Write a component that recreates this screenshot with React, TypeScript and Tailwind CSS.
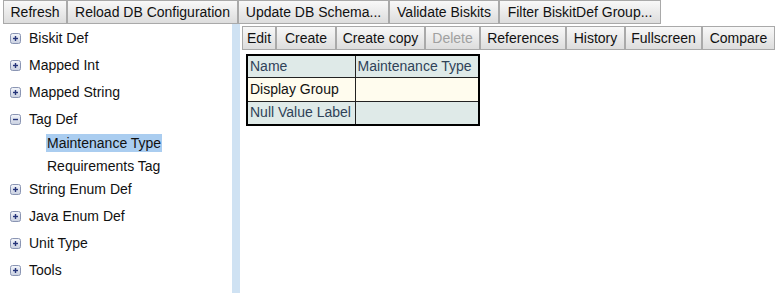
const topButtons = [
  { label: "Refresh", w: "w-[64px]" },
  { label: "Reload DB Configuration", w: "w-[171px]" },
  { label: "Update DB Schema...", w: "w-[151px]" },
  { label: "Validate Biskits", w: "w-[110px]" },
  { label: "Filter BiskitDef Group...", w: "w-[162px]" },
];

const editButtons = [
  { label: "Edit", w: "w-[34px]" },
  { label: "Create", w: "w-[60px]" },
  { label: "Create copy", w: "w-[89px]" },
  { label: "Delete", w: "w-[55px]", disabled: true },
  { label: "References", w: "w-[86px]" },
  { label: "History", w: "w-[59px]" },
  { label: "Fullscreen", w: "w-[77px]" },
  { label: "Compare", w: "w-[73px]" },
];

const treeBefore = ["Biskit Def", "Mapped Int", "Mapped String"];
const treeAfter = ["String Enum Def", "Java Enum Def", "Unit Type", "Tools"];

function ToolButton({ label, w, disabled }: { label: string; w: string; disabled?: boolean }) {
  return (
    <button
      className={`${w} h-[24px] shrink-0 border border-[#a9a9a9] bg-gradient-to-b from-[#f8f8f8] to-[#dddddd] px-0 text-center text-[14px] leading-none ${
        disabled ? "text-[#a0a0a0]" : "text-[#111]"
      }`}
    >
      {label}
    </button>
  );
}

function Expander({ open }: { open?: boolean }) {
  return (
    <svg width="11" height="11" viewBox="0 0 11 11" className="shrink-0">
      <defs>
        <linearGradient id="exg" x1="0" y1="0" x2="0" y2="1">
          <stop offset="0" stopColor="#f4f6fb" />
          <stop offset="1" stopColor="#c9d0e0" />
        </linearGradient>
      </defs>
      <rect x="0.5" y="0.5" width="10" height="10" rx="2" fill="url(#exg)" stroke="#8a95b3" />
      <line x1="3" y1="5.5" x2="8" y2="5.5" stroke="#26357a" strokeWidth="1.4" />
      {!open && <line x1="5.5" y1="3" x2="5.5" y2="8" stroke="#26357a" strokeWidth="1.4" />}
    </svg>
  );
}

function TreeNode({ label, open }: { label: string; open?: boolean }) {
  return (
    <div className="flex h-[27px] items-center gap-[8px] pl-[10px]">
      <Expander open={open} />
      <span className="text-[14px] text-[#111]">{label}</span>
    </div>
  );
}

export default function App() {
  return (
    <div className="flex h-[293px] w-[784px] flex-col overflow-hidden bg-white font-['Liberation_Sans',Arial,sans-serif]">
      <div className="flex pl-[3px]">
        {topButtons.map((b) => (
          <ToolButton key={b.label} label={b.label} w={b.w} />
        ))}
      </div>

      <div className="flex flex-1">
        <div className="w-[232px] shrink-0 pt-[1px]">
          {treeBefore.map((t) => (
            <TreeNode key={t} label={t} />
          ))}
          <TreeNode label="Tag Def" open />
          <div className="mb-[-1px] mt-[-2px] pl-[46px]">
            <div className="flex h-[23px] items-center">
              <span className="bg-[#aacdf0] px-[1px] text-[14px] leading-[18px] text-[#111]">Maintenance Type</span>
            </div>
            <div className="flex h-[23px] items-center">
              <span className="px-[1px] text-[14px] leading-[18px] text-[#111]">Requirements Tag</span>
            </div>
          </div>
          {treeAfter.map((t) => (
            <TreeNode key={t} label={t} />
          ))}
        </div>

        <div className="w-[8px] shrink-0 bg-[#cfe2f3]" />

        <div className="flex-1 pl-[2px] pt-[2px]">
          <div className="flex">
            {editButtons.map((b) => (
              <ToolButton key={b.label} label={b.label} w={b.w} disabled={b.disabled} />
            ))}
          </div>

          <table className="ml-[4px] mt-[4px] border-collapse border-2 border-black text-[14px]">
            <tbody>
              <tr className="bg-[#dfeae8] text-[#2f4258]">
                <td className="h-[22px] w-[108px] border border-[#222] px-[2px] py-0">Name</td>
                <td className="w-[124px] border border-[#222] px-[2px] py-0">Maintenance Type</td>
              </tr>
              <tr className="bg-[#fffcee] text-[#111]">
                <td className="h-[24px] border border-[#222] px-[2px] py-0">Display Group</td>
                <td className="border border-[#222] px-[2px] py-0"></td>
              </tr>
              <tr className="bg-[#dfeae8] text-[#2f4258]">
                <td className="h-[23px] border border-[#222] px-[2px] py-0">Null Value Label</td>
                <td className="border border-[#222] px-[2px] py-0"></td>
              </tr>
            </tbody>
          </table>
        </div>
      </div>
    </div>
  );
}
